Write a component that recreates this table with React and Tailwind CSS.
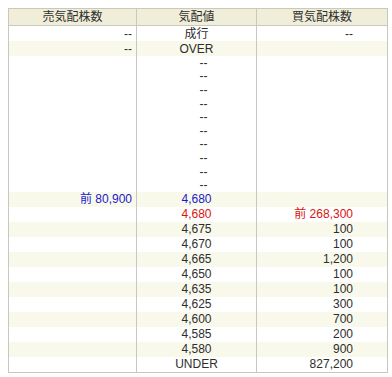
const rows = [
    { sell: '--', price: '成行', buy: '--' },
    { sell: '--', price: 'OVER', buy: '', striped: true },
    ...Array.from({ length: 10 }, () => ({ sell: '', price: '--', buy: '', short: true })),
    { sell: '前 80,900', price: '4,680', buy: '', tone: 'blue', striped: true },
    { sell: '', price: '4,680', buy: '前 268,300', tone: 'red' },
    { sell: '', price: '4,675', buy: '100', striped: true },
    { sell: '', price: '4,670', buy: '100' },
    { sell: '', price: '4,665', buy: '1,200', striped: true },
    { sell: '', price: '4,650', buy: '100' },
    { sell: '', price: '4,635', buy: '100', striped: true },
    { sell: '', price: '4,625', buy: '300' },
    { sell: '', price: '4,600', buy: '700', striped: true },
    { sell: '', price: '4,585', buy: '200' },
    { sell: '', price: '4,580', buy: '900', striped: true },
    { sell: '', price: 'UNDER', buy: '827,200' },
];

function App() {
    return (
        <div
            className="min-h-[377px] bg-white pl-2 pt-2 text-[12px] leading-none text-[#2e2e2e]"
            style={{ fontFamily: '"Liberation Sans", Arial, "Noto Sans CJK JP", sans-serif' }}
        >
            <div className="w-[380px] border border-[#c8c8c0]">
                <div className="flex h-[17px] items-center border-b border-[#c8c8c0] bg-[#f0eed9]">
                    <div className="flex h-full w-[128px] items-center justify-center border-r border-[#c8c8c0]">売気配株数</div>
                    <div className="flex h-full w-[120px] items-center justify-center border-r border-[#c8c8c0]">気配値</div>
                    <div className="flex h-full flex-1 items-center justify-center">買気配株数</div>
                </div>
                {rows.map((row, i) => (
                    <div
                        key={i}
                        className={`flex items-center ${row.short ? 'h-[13.6px]' : 'h-[15px]'} ${row.striped ? 'bg-[#f8f8eb]' : 'bg-white'}`}
                    >
                        <div
                            className={`flex h-full w-[128px] items-center justify-end border-r border-[#c8c8c0] pr-[4px] ${row.tone === 'blue' ? 'text-[#1a1acc]' : ''}`}
                        >
                            {row.sell}
                        </div>
                        <div
                            className={`flex h-full w-[120px] items-center justify-center border-r border-[#c8c8c0] ${row.short ? 'pl-[14px]' : ''} ${row.tone === 'blue' ? 'text-[#1a1acc]' : row.tone === 'red' ? 'text-[#dd1111]' : ''}`}
                        >
                            {row.price}
                        </div>
                        <div
                            className={`flex h-full flex-1 items-center justify-end pr-[34px] ${row.tone === 'red' ? 'text-[#dd1111]' : ''}`}
                        >
                            {row.buy}
                        </div>
                    </div>
                ))}
            </div>
        </div>
    );
}

export default App;
